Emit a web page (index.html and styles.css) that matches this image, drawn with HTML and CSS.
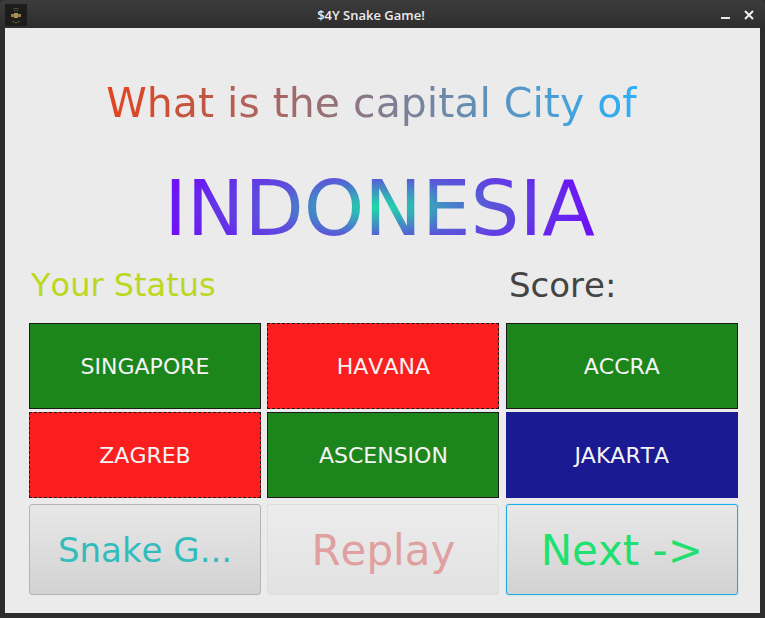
FILE: index.html
```html
<!DOCTYPE html>
<html lang="en">
<head>
  <meta charset="UTF-8">
  <meta name="viewport" content="width=device-width, initial-scale=1.0">
  <title>$4Y Snake Game!</title>
  <link rel="stylesheet" href="styles.css">
</head>
<body>
  <div id="window">
    <div class="titlebar">
      <svg class="app-icon" width="22" height="22" viewBox="0 0 22 22">
        <rect width="22" height="22" fill="#1c1c1a"/>
        <path d="M8 4.500h6M9 6.500h4" stroke="#4a4a38" stroke-width="1"/>
        <rect x="6" y="10" width="10" height="3" fill="#96804a"/>
        <rect x="9" y="9" width="4" height="5" fill="#a89058"/>
        <path d="M7 17l4 2 4-2" stroke="#5c5c44" stroke-width="1" fill="none"/>
      </svg>
      <span class="title">$4Y Snake Game!</span>
      <div class="win-buttons">
        <svg width="10" height="10" viewBox="0 0 10 10"><path d="M0 8h9" stroke="#e8e8e8" stroke-width="2"/></svg>
        <svg width="10" height="10" viewBox="0 0 10 10"><path d="M1 1l8 8M9 1l-8 8" stroke="#f0f0f0" stroke-width="2"/></svg>
      </div>
    </div>

    <div id="container">
      <h2 class="question">What is the capital City of</h2>
      <h1 class="country">INDONESIA</h1>

      <div class="status-row">
        <span class="status">Your Status</span>
        <span class="score">Score:</span>
      </div>

      <div class="answers">
        <button class="answer green">SINGAPORE</button>
        <button class="answer red">HAVANA</button>
        <button class="answer green">ACCRA</button>
        <button class="answer red">ZAGREB</button>
        <button class="answer green">ASCENSION</button>
        <button class="answer blue">JAKARTA</button>
      </div>

      <div class="actions">
        <button class="action snake">Snake G...</button>
        <button class="action replay">Replay</button>
        <button class="action next">Next -&gt;</button>
      </div>
    </div>
  </div>
</body>
</html>
```

FILE: styles.css
```css
* {
  box-sizing: border-box;
}

body {
  margin: 0;
  background-color: #2d2d2d;
  font-family: "DejaVu Sans", sans-serif;
  font-kerning: none;
}

#window {
  width: 765px;
  height: 618px;
  padding: 0 5px 5px;
  background-color: #2d2d2d;
  display: flex;
  flex-direction: column;
}

.titlebar {
  height: 28px;
  flex: none;
  margin: 0 -5px;
  padding: 4px 11px 2px 5px;
  background: linear-gradient(#3c3c3c, #2e2e2e);
  border-radius: 5px 5px 0 0;
  display: flex;
  align-items: center;
  justify-content: space-between;
}

.app-icon {
  display: block;
}

.title {
  color: #ececec;
  font-family: "Open Sans", sans-serif;
  font-size: 13px;
  font-weight: 600;
  margin-right: 6px;
}

.win-buttons {
  display: flex;
  gap: 13px;
}

#container {
  flex: 1;
  background-color: #ebebeb;
  padding: 0 22px 18px 24px;
  display: flex;
  flex-direction: column;
}

.question {
  margin: 50px 24px 0 0;
  height: 50px;
  font-size: 41px;
  line-height: 50px;
  font-weight: normal;
  width: max-content;
  align-self: center;
  background: linear-gradient(90deg, #e2431c, #2cb0f8);
  -webkit-background-clip: text;
  background-clip: text;
  color: transparent;
}

.country {
  margin: 37px 8px 0 0;
  height: 88px;
  font-size: 77px;
  line-height: 88px;
  font-weight: normal;
  width: max-content;
  align-self: center;
  background: radial-gradient(ellipse 215px 60px at 50% 48%, #1fdca8, #5a58d8 50%, #6c14f4 100%);
  -webkit-background-clip: text;
  background-clip: text;
  color: transparent;
}

.status-row {
  margin-top: 10px;
  height: 50px;
  padding-left: 2px;
  display: flex;
  font-size: 32px;
  line-height: 44px;
}

.status {
  width: 478px;
  color: #bcd81e;
}

.score {
  color: #444444;
  font-size: 34px;
}

.answers {
  margin-top: 10px;
  display: grid;
  grid-template-columns: repeat(3, 232px);
  grid-auto-rows: 86px;
  column-gap: 6.400px;
  row-gap: 3px;
}

button {
  font-family: inherit;
  font-kerning: none;
  padding: 0;
}

.answer {
  border: 1px solid #1a1a1a;
  color: #f4f4f4;
  font-size: 22px;
}

.green {
  background-color: #1c861c;
}

.red {
  background-color: #fa1e1e;
  border-style: dashed;
}

.blue {
  background-color: #1a1a92;
  border-color: #1a1a92;
}

.actions {
  margin-top: 6px;
  flex: 1;
  display: grid;
  grid-template-columns: repeat(3, 232px);
  column-gap: 6.400px;
}

.action {
  border: 1px solid #b4b4b4;
  border-radius: 3px;
  background: linear-gradient(#e8e8e8, #d2d2d2);
  font-size: 34px;
}

.snake {
  color: #32bcbc;
}

.replay {
  color: #e0a0a0;
  font-size: 42px;
  padding-top: 2px;
  border-color: #dcdcdc;
  background: linear-gradient(#ececec, #e2e2e2);
}

.next {
  color: #1fe070;
  font-size: 42px;
  padding-top: 2px;
  border-color: #1cace4;
  box-shadow: 0 0 1px #1cace4;
}
```
